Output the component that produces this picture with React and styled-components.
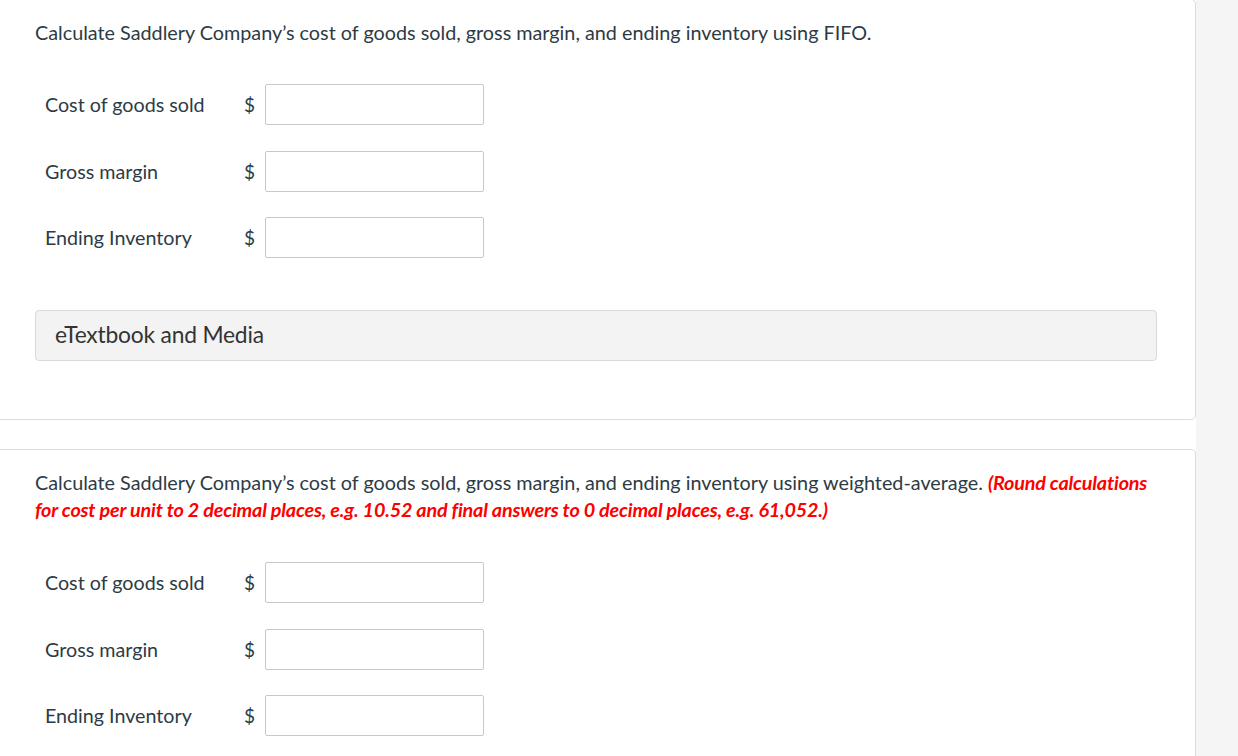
import React from 'react'
import styled, { createGlobalStyle } from 'styled-components'

const GlobalStyle = createGlobalStyle`
  html, body {
    margin: 0;
    padding: 0;
    background: #ffffff;
    font-family: Lato, "Open Sans", sans-serif;
  }
`;

const Page = styled.div`
  display: flex;
  min-height: 756px;
  overflow: hidden;
`;

const Main = styled.div`
  width: 1196px;
  background: #ffffff;
  display: flex;
  flex-direction: column;
  gap: 29px;
  margin-top: -1px;
`;

const Side = styled.div`
  flex: 1;
  background: #f5f5f5;
`;

const Card = styled.section`
  border: 1px solid #dcdcdc;
  border-left: none;
  border-radius: 0 5px 5px 0;
  padding: 19px 38px ${p => p.$bottom || 0}px 35px;
  background: #fff;
`;

const Prompt = styled.p`
  margin: 0;
  font-size: 19.8px;
  line-height: 27px;
  color: #2d3b45;
`;

const Note = styled.span`
  color: #ff0000;
  font-weight: 700;
  font-style: italic;
  letter-spacing: -0.2px;
`;

const Fields = styled.div`
  display: flex;
  flex-direction: column;
  gap: 25.5px;
  margin-top: ${p => p.$top}px;
  padding-left: 10px;
`;

const Row = styled.div`
  display: flex;
  align-items: center;
  height: 41px;
`;

const Label = styled.span`
  width: 200px;
  font-size: 19.7px;
  color: #2d3b45;
`;

const Dollar = styled.span`
  width: 20px;
  font-size: 19px;
  color: #2d3b45;
  margin-left: -1px;
`;

const Input = styled.input`
  box-sizing: border-box;
  width: 219px;
  height: 41px;
  border: 1px solid #c8c8c8;
  border-radius: 2px;
  background: #fff;
  margin: 0 0 0 1px;
  padding: 0 8px;
  font-family: inherit;
  font-size: 16px;
`;

const MediaBar = styled.div`
  margin-top: 52px;
  height: 51px;
  box-sizing: border-box;
  border: 1px solid #dadada;
  border-radius: 4px;
  background: #f3f3f3;
  display: flex;
  align-items: center;
  padding: 0 0 3px 19px;
  font-size: 22.8px;
  color: #333;
  letter-spacing: -0.2px;
`;

const labels = ['Cost of goods sold', 'Gross margin', 'Ending Inventory'];

function AnswerFields({ top }) {
  return (
    <Fields $top={top}>
      {labels.map(l => (
        <Row key={l}>
          <Label>{l}</Label>
          <Dollar>$</Dollar>
          <Input type="text" />
        </Row>
      ))}
    </Fields>
  );
}

export default function App() {
  return (
    <>
      <GlobalStyle />
      <Page>
        <Main>
          <Card $bottom={58}>
            <Prompt>
              Calculate Saddlery Company’s cost of goods sold, gross margin, and ending inventory using FIFO.
            </Prompt>
            <AnswerFields top={38} />
            <MediaBar>eTextbook and Media</MediaBar>
          </Card>
          <Card $bottom={40}>
            <Prompt>
              Calculate Saddlery Company’s cost of goods sold, gross margin, and ending inventory using weighted-average.{' '}
              <Note>
                (Round calculations for cost per unit to 2 decimal places, e.g. 10.52 and final answers to 0 decimal places, e.g. 61,052.)
              </Note>
            </Prompt>
            <AnswerFields top={39} />
          </Card>
        </Main>
        <Side />
      </Page>
    </>
  );
}
